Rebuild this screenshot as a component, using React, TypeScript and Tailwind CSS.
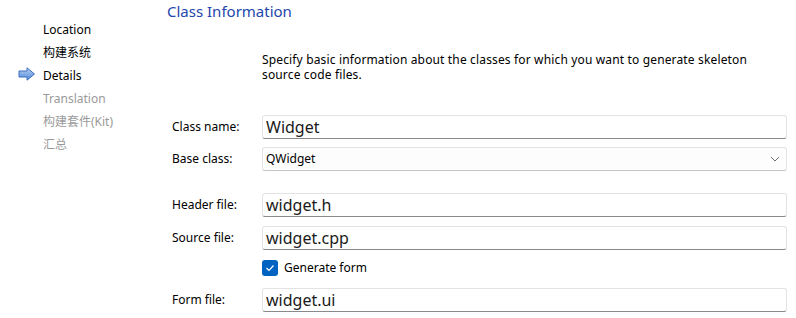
import React from 'react';

const steps = [
  { label: 'Location', active: true },
  { label: '构建系统', active: true },
  { label: 'Details', active: true, current: true },
  { label: 'Translation', active: false },
  { label: '构建套件(Kit)', active: false },
  { label: '汇总', active: false },
];

function StepArrow() {
  return (
    <svg width="18" height="14" viewBox="0 0 18 14" className="absolute left-[-25px] top-[1px]">
      <defs>
        <linearGradient id="arr" x1="0" y1="0" x2="0" y2="1">
          <stop offset="0" stopColor="#b9d4f5" />
          <stop offset="1" stopColor="#4f86d6" />
        </linearGradient>
      </defs>
      <path d="M1 4 H9 V0.8 L16.5 7 L9 13.2 V10 H1 Z" fill="url(#arr)" stroke="#3a6fc0" strokeWidth="1" strokeLinejoin="round" />
    </svg>
  );
}

function TextField({ value }: { value: string }) {
  return (
    <div className="h-[24px] flex items-center bg-white border border-[#e3e3e3] border-b-[#8a8a8a] rounded-[3px] pl-[3px] text-[16px] text-[#1a1a1a]">
      {value}
    </div>
  );
}

export default function App() {
  return (
    <div
      className="w-[796px] h-[318px] bg-white flex overflow-hidden text-[12px] text-black"
      style={{ fontFamily: '"Noto Sans", "Noto Sans CJK SC", sans-serif' }}
    >
      {/* Wizard steps */}
      <div className="w-[167px] pl-[43px] pt-[20px] flex flex-col">
        {steps.map((s) => (
          <div
            key={s.label}
            className={`relative h-[23px] leading-[20px] ${s.active ? 'text-black' : 'text-[#9a9a9a]'}`}
          >
            {s.current && <StepArrow />}
            {s.label}
          </div>
        ))}
      </div>

      {/* Page */}
      <div className="flex-1 pr-[9px]">
        <h1 className="text-[15px] leading-[22px] text-[#2446ad]">Class Information</h1>

        <p className="ml-[95px] mt-[30px] leading-[15px] w-[500px] tracking-[0.15px]">
          Specify basic information about the classes for which you want to generate skeleton source code files.
        </p>

        <div className="mt-[33px] grid grid-cols-[95px_1fr] items-center">
          <div className="pl-[5px]">Class name:</div>
          <TextField value="Widget" />

          <div className="pl-[5px] mt-[8px]">Base class:</div>
          <div className="mt-[8px] h-[24px] flex items-center justify-between bg-[#fdfdfd] border border-[#e3e3e3] border-b-[#c4c4c4] rounded-[3px] pl-[3px] pr-[6px]">
            <span>QWidget</span>
            <svg width="10" height="6" viewBox="0 0 10 6">
              <path d="M1 1 L5 5 L9 1" fill="none" stroke="#707070" strokeWidth="1" />
            </svg>
          </div>

          <div className="pl-[5px] mt-[22px]">Header file:</div>
          <div className="mt-[22px]">
            <TextField value="widget.h" />
          </div>

          <div className="pl-[5px] mt-[9px]">Source file:</div>
          <div className="mt-[9px]">
            <TextField value="widget.cpp" />
          </div>

          <div className="mt-[10px]" />
          <label className="mt-[10px] flex items-center gap-[6px] h-[16px]">
            <span className="w-[16px] h-[16px] rounded-[3px] bg-[#0063c2] flex items-center justify-center">
              <svg width="10" height="8" viewBox="0 0 10 8">
                <path d="M1.5 4 L4 6.5 L8.5 1.5" fill="none" stroke="white" strokeWidth="1.2" />
              </svg>
            </span>
            <span>Generate form</span>
          </label>

          <div className="pl-[5px] mt-[12px]">Form file:</div>
          <div className="mt-[12px]">
            <TextField value="widget.ui" />
          </div>
        </div>
      </div>
    </div>
  );
}
